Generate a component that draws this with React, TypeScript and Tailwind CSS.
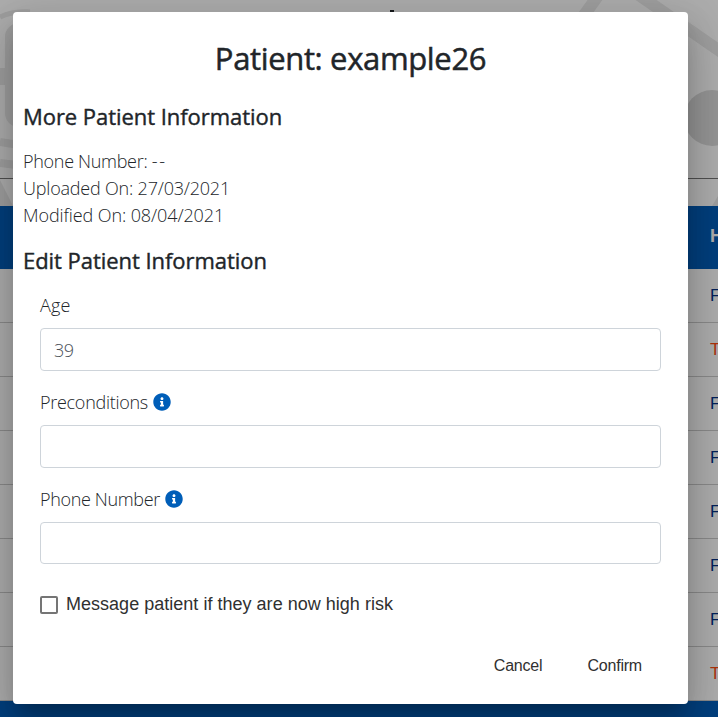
import type { ReactNode } from "react";

const rows = ["F", "T", "F", "F", "F", "F", "F", "T"];

function InfoIcon() {
  return (
    <svg viewBox="0 0 512 512" className="mt-[-1px] size-[18px] fill-[#005eb8]">
      <path d="M256 8C119.043 8 8 119.083 8 256c0 136.997 111.043 248 248 248s248-111.003 248-248C504 119.083 392.957 8 256 8zm0 110c23.196 0 42 18.804 42 42s-18.804 42-42 42-42-18.804-42-42 18.804-42 42-42zm56 254c0 6.627-5.373 12-12 12h-88c-6.627 0-12-5.373-12-12v-24c0-6.627 5.373-12 12-12h12v-64h-12c-6.627 0-12-5.373-12-12v-24c0-6.627 5.373-12 12-12h64c6.627 0 12 5.373 12 12v100h12c6.627 0 12 5.373 12 12v24z" />
    </svg>
  );
}

function Field({ label, icon, value, box }: { label: ReactNode; icon?: boolean; value?: string; box: string }) {
  return (
    <label className="block">
      <span className="flex h-[27px] items-center gap-[5px]">
        {label}
        {icon && <InfoIcon />}
      </span>
      <input
        defaultValue={value}
        className={`mt-[9px] block w-full rounded-[4px] border border-[#ced4da] bg-white px-[13px] font-light tracking-[-0.4px] text-[#495057] outline-none ${box}`}
      />
    </label>
  );
}

function Backdrop() {
  return (
    <div className="flex h-full flex-col bg-white">
      <div className="relative h-[179px] shrink-0 border-b border-[#777]">
        <svg width="718" height="206" className="absolute left-0 top-0" fill="none">
          <g stroke="#eaeaea">
            <path d="M0 17Q13 11 30 12" strokeWidth="5" />
            <rect x="9" y="27" width="48" height="96" rx="10" strokeWidth="8" />
            <path d="M0 76.500H40" strokeWidth="17" />
            <path d="M0 142L25 146M0 163L25 166" strokeWidth="8" />
            <path d="M600 -7L582 18M636 -7L727 56" strokeWidth="12" />
          </g>
          <circle cx="712" cy="118" r="28" fill="#dcdcdc" />
          <path d="M0 180L13 206H0zM718 196L712 206H718z" fill="#eaeaea" />
        </svg>
        <div className="absolute left-[390px] top-[10px] h-4 w-1 bg-[#212529]" />
      </div>
      <div className="mt-[27px] flex h-[63px] shrink-0 items-center bg-[#005eb8] pl-[710px] text-[18px] font-bold text-white">
        <span className="relative -top-[1px]">H</span>
      </div>
      {rows.map((flag, i) => (
        <div
          key={i}
          className={`flex h-[54px] shrink-0 items-center border-b border-[#ccc] pl-[710px] text-[17px] ${flag === "T" ? "text-[#ff4a10]" : "text-[#003087]"}`}
        >
          {flag}
        </div>
      ))}
      <div className="grow bg-[#005eb8]" />
    </div>
  );
}

export default function App() {
  return (
    <div className="relative h-[717px] w-[718px] overflow-hidden font-['Liberation_Sans',Arial,sans-serif]">
      <Backdrop />
      <div className="absolute inset-0 bg-black/32 pl-[13px] pt-3">
        <div className="flex h-[692px] w-[675px] flex-col rounded-[4px] bg-white px-[10px] text-[#212529] shadow-[0_11px_15px_-7px_rgba(0,0,0,0.2),0_24px_38px_3px_rgba(0,0,0,0.14),0_9px_46px_8px_rgba(0,0,0,0.12)]">
          <div className="font-['Open_Sans','Noto_Sans',sans-serif] text-[18px] font-light leading-[27px] tracking-[-0.2px]">
            <h1 className="mt-[26px] text-center text-[31px] font-medium leading-[40px] tracking-[-0.35px] [-webkit-text-stroke:0.5px_#212529]">Patient: example26</h1>
            <h2 className="mt-[24px] text-[22px] font-medium leading-[28px] tracking-[-0.05px] [-webkit-text-stroke:0.4px_#212529]">More Patient Information</h2>
            <div className="mt-[18px]">
              <p className="tracking-[-0.3px]">Phone Number: <span className="tracking-[1.8px]">--</span></p>
              <p>Uploaded On: 27/03/2021</p>
              <p className="tracking-[-0.1px]">Modified On: 08/04/2021</p>
            </div>
            <h2 className="mt-[17px] text-[22px] font-medium leading-[28px] tracking-[-0.05px] [-webkit-text-stroke:0.4px_#212529]">Edit Patient Information</h2>
            <div className="mt-[18px] flex flex-col gap-[18px] px-[17px]">
              <Field label={<span className="tracking-[0.2px]">Age</span>} value="39" box="h-[43px]" />
              <Field label={<span className="tracking-[-0.28px]">Preconditions</span>} icon box="h-[43px]" />
              <Field label={<span className="tracking-[-0.34px]">Phone Number</span>} icon box="h-[42px]" />
            </div>
          </div>
          <label className="mt-[30px] flex h-5 items-center gap-[8px] pl-[17px] text-[18px] leading-5 text-[#303030]">
            <span className="mt-[2px] size-[18px] rounded-[2px] border-2 border-[#757575]" />
            <span className="tracking-[0.02px]">Message patient if they are now high risk</span>
          </label>
          <div className="mt-[42px] flex justify-end gap-[45px] pr-[36px] text-[16px] leading-5 tracking-[-0.2px] text-[#303030]">
            <button>Cancel</button>
            <button>Confirm</button>
          </div>
        </div>
      </div>
    </div>
  );
}
